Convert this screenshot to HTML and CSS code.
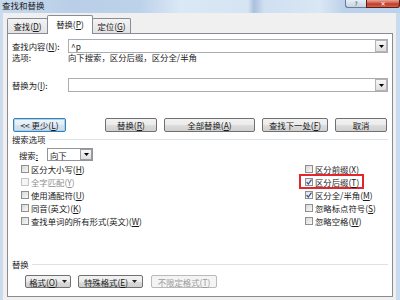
FILE: index.html
```html
<!DOCTYPE html>
<html lang="zh-CN">
<head>
<meta charset="utf-8">
<title>查找和替换</title>
<link rel="stylesheet" href="styles.css">
</head>
<body>
<div class="win">
  <div class="titlebar">
    <span class="title">查找和替换</span>
    <div class="caption">
      <div class="cap-help">?</div>
      <div class="cap-close">✕</div>
    </div>
  </div>
  <div class="client">
    <div class="tabs">
      <div class="tab t1">查找(<u>D</u>)</div>
      <div class="tab t2 active">替换(<u>P</u>)</div>
      <div class="tab t3">定位(<u>G</u>)</div>
    </div>
    <div class="pane">
      <div class="field">
        <span class="flabel">查找内容(<u>N</u>):</span>
        <div class="combo"><span class="combo-text">^p</span><span class="drop"><svg width="5" height="3" viewBox="0 0 5 3"><polygon points="0,0 5,0 2.5,3" fill="#000"/></svg></span></div>
      </div>
      <div class="opts"><span class="flabel">选项:</span><span>向下搜索，区分后缀，区分全/半角</span></div>
      <div class="field f-replace">
        <span class="flabel">替换为(<u>I</u>):</span>
        <div class="combo"><span class="combo-text"></span><span class="drop"><svg width="5" height="3" viewBox="0 0 5 3"><polygon points="0,0 5,0 2.5,3" fill="#000"/></svg></span></div>
      </div>
      <div class="btnrow">
        <button class="btn b-less default">&lt;&lt; 更少(<u>L</u>)</button>
        <div class="btngroup">
          <button class="btn b-rep">替换(<u>R</u>)</button>
          <button class="btn b-all">全部替换(<u>A</u>)</button>
          <button class="btn b-next">查找下一处(<u>F</u>)</button>
          <button class="btn b-cancel">取消</button>
        </div>
      </div>
      <div class="group"><span>搜索选项</span><i></i></div>
      <div class="search-row">
        <span class="slabel">搜索<u>:</u></span>
        <div class="select"><span>向下</span><span class="drop"><svg width="5" height="3" viewBox="0 0 5 3"><polygon points="0,0 5,0 2.5,3" fill="#000"/></svg></span></div>
      </div>
      <div class="checks">
        <div class="col col-l">
          <div class="chk"><span class="box"></span><span>区分大小写(<u>H</u>)</span></div>
          <div class="chk disabled"><span class="box"></span><span>全字匹配(<u>Y</u>)</span></div>
          <div class="chk"><span class="box"></span><span>使用通配符(<u>U</u>)</span></div>
          <div class="chk"><span class="box"></span><span>同音(英文)(<u>K</u>)</span></div>
          <div class="chk"><span class="box"></span><span>查找单词的所有形式(英文)(<u>W</u>)</span></div>
        </div>
        <div class="col col-r">
          <div class="chk"><span class="box"></span><span>区分前缀(<u>X</u>)</span></div>
          <div class="chk hl"><span class="box checked"><svg width="6" height="6" viewBox="0 0 6 6"><path d="M0.6 3.1 L2.3 5 L5.5 0.6" fill="none" stroke="#2b4fa0" stroke-width="1.2"/></svg></span><span>区分后缀(<u>T</u>)</span></div>
          <div class="chk"><span class="box checked"><svg width="6" height="6" viewBox="0 0 6 6"><path d="M0.6 3.1 L2.3 5 L5.5 0.6" fill="none" stroke="#2b4fa0" stroke-width="1.2"/></svg></span><span>区分全/半角(<u>M</u>)</span></div>
          <div class="chk"><span class="box"></span><span>忽略标点符号(<u>S</u>)</span></div>
          <div class="chk"><span class="box"></span><span>忽略空格(<u>W</u>)</span></div>
        </div>
      </div>
      <div class="bottom">
        <div class="group"><span>替换</span><i></i></div>
        <div class="brow">
          <button class="btn b-fmt">格式(<u>O</u>)<svg class="caret" width="5" height="3" viewBox="0 0 5 3"><polygon points="0,0 5,0 2.5,3" fill="#222"/></svg></button>
          <button class="btn b-spec">特殊格式(<u>E</u>)<svg class="caret" width="5" height="3" viewBox="0 0 5 3"><polygon points="0,0 5,0 2.5,3" fill="#222"/></svg></button>
          <button class="btn b-nofmt" disabled>不限定格式(<u>T</u>)</button>
        </div>
      </div>
    </div>
  </div>
</div>
</body>
</html>
```

FILE: styles.css
```css
* { box-sizing: border-box; }
html, body { margin: 0; padding: 0; }
body {
  width: 400px;
  height: 300px;
  overflow: hidden;
  font-family: "Noto Sans CJK SC", "Noto Sans", sans-serif;
  font-size: 8.4px;
  color: #1a1a1a;
}
u { text-decoration: underline; text-underline-offset: 1px; }

.win {
  width: 400px;
  height: 300px;
  display: flex;
  flex-direction: column;
  background: linear-gradient(90deg, #cddcec 0%, #c4d7eb 60%, #c9dbee 100%);
}

.titlebar {
  height: 13px;
  flex: none;
  display: flex;
  justify-content: space-between;
  align-items: flex-start;
  background: linear-gradient(90deg, #c7daee 0%, #b9cfe7 18%, #bcd2ea 35%, #dbe8f5 45%, #d5e4f3 62%, #a9c1dc 63.5%, #cfe0f1 66%, #dae7f4 80%, #bcd2ea 86%);
}
.title {
  margin: 0 0 0 2px;
  font-size: 8.5px;
  line-height: 11px;
  color: #1b1b1b;
}
.caption { display: flex; }
.cap-help {
  width: 21px;
  height: 8px;
  border: 1px solid #6c7b92;
  border-top: none;
  border-right: none;
  border-radius: 0 0 0 3px;
  background: linear-gradient(#e7eef6, #c5d4e6);
  font-family: "DejaVu Sans", sans-serif;
  font-size: 6px;
  line-height: 7px;
  text-align: center;
  color: #35475f;
}
.cap-close {
  width: 34px;
  height: 8px;
  border: 1px solid #5a1f16;
  border-top: none;
  border-radius: 0 0 3px 0;
  background: linear-gradient(#e7a597, #d0594a 45%, #c03a26 55%, #cf6450);
  color: #fff;
  font-family: "DejaVu Sans", sans-serif;
  font-size: 6px;
  line-height: 7px;
  text-align: center;
}

.client {
  flex: 1;
  margin: 0 4px 0 3px;
  background: #f0f0f0;
  padding: 2px 3px 3px 4px;
  display: flex;
  flex-direction: column;
}

.tabs { display: flex; align-items: flex-end; height: 18px; flex: none; }
.tab {
  height: 15px;
  border: 1px solid #898c95;
  border-bottom: none;
  border-radius: 2px 2px 0 0;
  background: linear-gradient(#f3f3f3, #e3e3e3);
  display: flex;
  align-items: center;
  justify-content: center;
  line-height: 10px;
}
.t1 { width: 41px; }
.t2 { width: 46px; margin-left: -1px; }
.t3 { width: 39px; margin-left: -1px; }
.tab.active {
  height: 19px;
  margin-bottom: -1px;
  background: #fff;
  position: relative;
  z-index: 1;
  padding-bottom: 2px;
}

.pane {
  flex: 1;
  border: 1px solid #898c95;
  background: #fff;
  padding: 5px 4px 8px 4px;
  display: flex;
  flex-direction: column;
}

.field { display: flex; align-items: center; height: 14px; flex: none; }
.flabel { width: 56px; flex: none; line-height: 10px; }
.combo {
  flex: 1;
  height: 14px;
  border: 1px solid #a8adb4;
  background: #fff;
  display: flex;
  align-items: center;
  padding: 0 0 0 2px;
  line-height: 10px;
}
.combo-text { flex: 1; }
.drop {
  width: 12px;
  height: 12px;
  flex: none;
  border: 1px solid #b4b4b4;
  background: linear-gradient(#f6f6f6, #dedede);
  display: flex;
  align-items: center;
  justify-content: center;
}

.opts { display: flex; height: 10px; line-height: 10px; margin-top: -1px; flex: none; }
.f-replace { margin-top: 16px; }

.btnrow {
  display: flex;
  justify-content: space-between;
  margin-top: 26px;
  height: 14px;
  padding: 0 1px;
  flex: none;
}
.btngroup { display: flex; gap: 7px; }
.btn {
  height: 14px;
  font: inherit;
  padding: 0;
  margin: 0;
  border: 1px solid #707070;
  border-radius: 2px;
  background: linear-gradient(#f2f2f2 0%, #ebebeb 50%, #dddddd 51%, #cfcfcf 100%);
  color: #1a1a1a;
  line-height: 10px;
  display: flex;
  align-items: center;
  justify-content: center;
}
.btn.default {
  border-color: #3c7fb1;
  box-shadow: inset 0 0 0 1px #a6d4f2;
  background: linear-gradient(#eef4fa 0%, #e4edf5 50%, #d6e3ef 51%, #cddcea 100%);
}
.b-less { width: 53px; }
.b-rep { width: 52px; }
.b-all { width: 91px; }
.b-next { width: 66px; }
.b-cancel { width: 52px; }

.group {
  display: flex;
  align-items: center;
  height: 10px;
  line-height: 10px;
  margin-top: 2px;
  flex: none;
}
.group i { flex: 1; height: 1px; background: #dbe3ea; margin-left: 3px; }

.search-row {
  display: flex;
  align-items: center;
  margin-top: 4px;
  height: 13px;
  padding-left: 7px;
  flex: none;
}
.slabel { width: 28px; line-height: 10px; }
.select {
  width: 46px;
  height: 13px;
  border: 1px solid #8f949b;
  display: flex;
  align-items: center;
  justify-content: space-between;
  padding-left: 2px;
  line-height: 10px;
}
.select .drop { height: 11px; width: 12px; border-color: #9c9c9c; }

.checks { display: flex; padding-left: 9px; margin-top: 1px; flex: none; }
.col { display: flex; flex-direction: column; align-items: flex-start; }
.col-l { width: 284px; }
.chk { height: 13px; display: flex; align-items: center; gap: 2px; line-height: 10px; }
.box {
  width: 8px;
  height: 8px;
  border: 1px solid #8e8f8f;
  background: linear-gradient(135deg, #d8d8d8, #f8f8f8);
  display: flex;
  align-items: center;
  justify-content: center;
}
.box.checked { background: linear-gradient(135deg, #e2e2e2, #fbfbfb); }
.chk.disabled { color: #8d8d8d; }
.chk.disabled .box { border-color: #c4c4c4; background: #f5f5f5; }
.chk.hl {
  margin: -1px -5px -1px -6px;
  padding: 0 3px 0 4px;
  height: 15px;
  border: 2px solid #e3262b;
}

.bottom { margin-top: auto; flex: none; }
.brow { display: flex; margin-top: 6px; padding-left: 13px; }
.brow .btn { height: 13px; }
.b-fmt { width: 46px; }
.b-spec { width: 65px; margin-left: 7px; }
.b-nofmt { width: 66px; margin-left: 8px; }
.btn:disabled {
  color: #9a9a9a;
  border-color: #b9b9b9;
  background: #f4f4f4;
}
.caret { margin-left: 4px; }
```
